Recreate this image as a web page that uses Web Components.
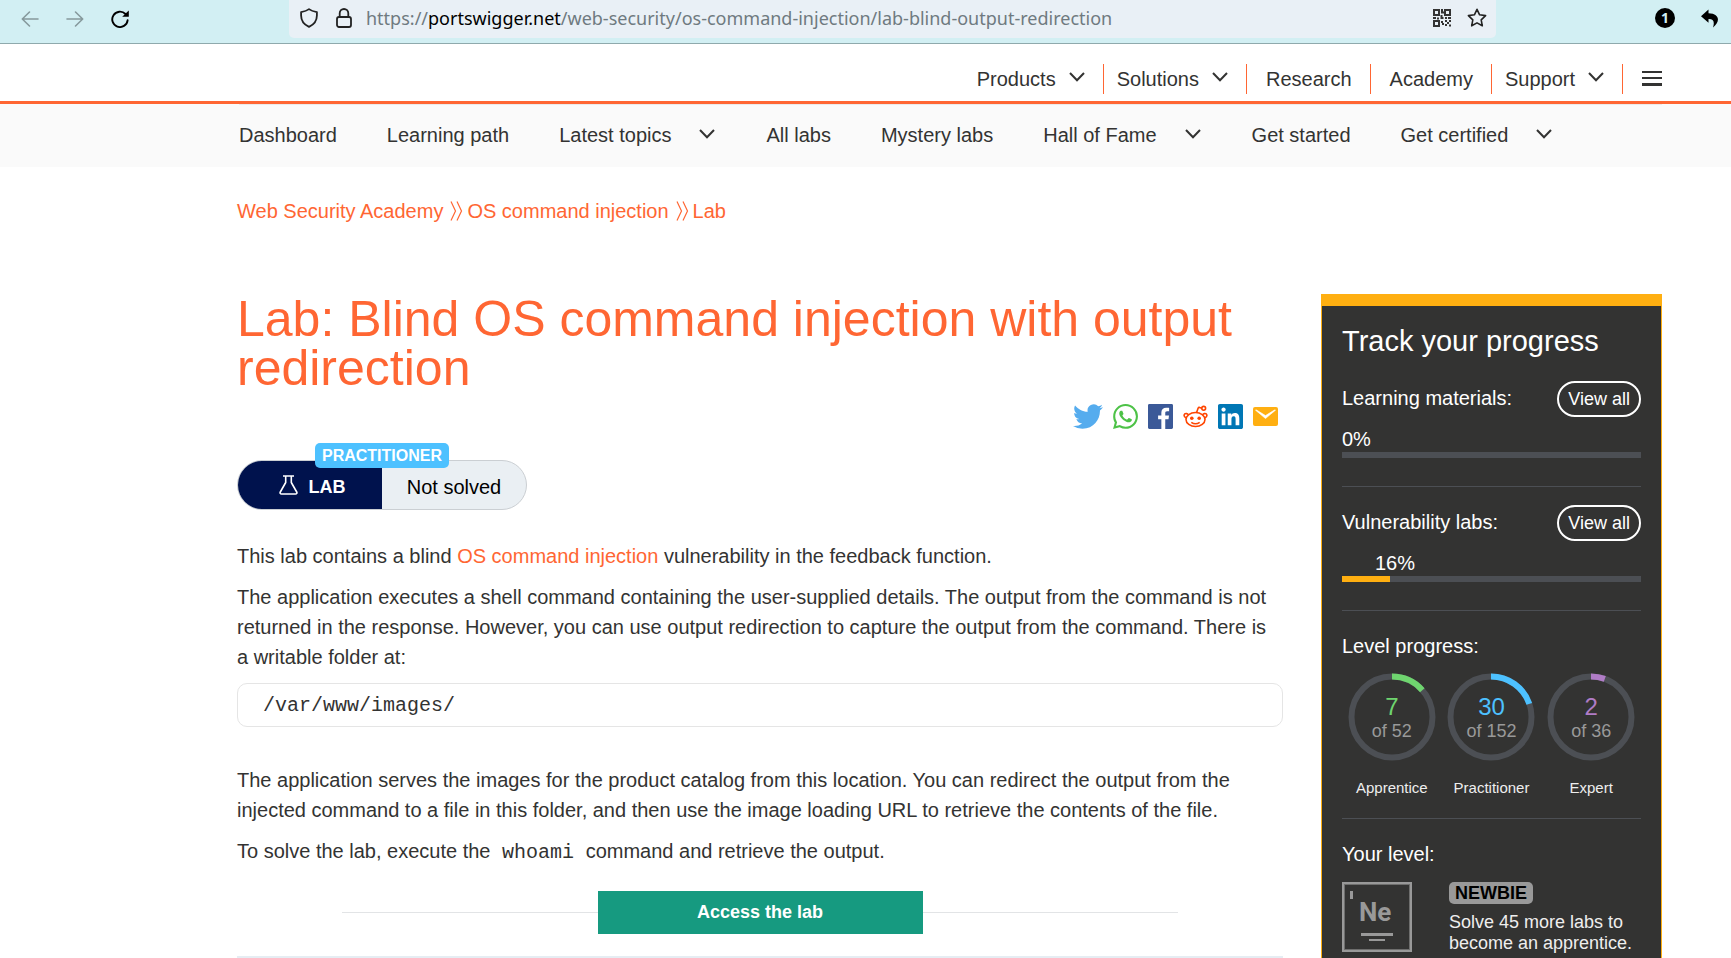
<!DOCTYPE html>
<html lang="en">
<head>
<meta charset="utf-8">
<title>Lab: Blind OS command injection with output redirection | Web Security Academy</title>
<style>
  :root {
    --brand: #ff6633;
    --ink: #333332;
    --amber: #ffaf11;
    --track: #4c4f54;
  }
  body {
    margin: 0;
    min-height: 100vh;
    display: flex;
    flex-direction: column;
    background: #fff;
    color: var(--ink);
    font: 20px/30px "Liberation Sans", Arial, sans-serif;
  }
</style>
</head>
<body>
<browser-bar></browser-bar>

<site-header>
  <nav-item href="#products" menu>Products</nav-item>
  <nav-item href="#solutions" menu>Solutions</nav-item>
  <nav-item href="#research" wide>Research</nav-item>
  <nav-item href="#academy" wide>Academy</nav-item>
  <nav-item href="#support" menu>Support</nav-item>
</site-header>

<academy-nav>
  <sub-item href="#dashboard">Dashboard</sub-item>
  <sub-item href="#path">Learning path</sub-item>
  <sub-item href="#topics" menu>Latest topics</sub-item>
  <sub-item href="#labs">All labs</sub-item>
  <sub-item href="#mystery">Mystery labs</sub-item>
  <sub-item href="#fame" menu>Hall of Fame</sub-item>
  <sub-item href="#start">Get started</sub-item>
  <sub-item href="#certified" menu>Get certified</sub-item>
</academy-nav>

<lab-page>
  <bread-crumbs slot="crumbs"></bread-crumbs>
  <lab-article slot="article"></lab-article>
  <progress-panel slot="aside">
    <progress-row label="Learning materials:" value="0" shift="0"></progress-row>
    <progress-row label="Vulnerability labs:" value="16" shift="33"></progress-row>
    <level-ring slot="rings" value="7" total="52" name="Apprentice" color="#6fd56f"></level-ring>
    <level-ring slot="rings" value="30" total="152" name="Practitioner" color="#4dc1ff"></level-ring>
    <level-ring slot="rings" value="2" total="36" name="Expert" color="#b07cc6"></level-ring>
  </progress-panel>
</lab-page>

<script>
const RESET = `:host{box-sizing:border-box} *{box-sizing:border-box;margin:0} a{color:inherit;text-decoration:none}
  button{font:inherit;color:inherit;background:none;border:0;padding:0;cursor:pointer} svg{display:block;flex:none}`;

function define(name, render) {
  customElements.define(name, class extends HTMLElement {
    connectedCallback() {
      if (this.shadowRoot) return;
      const t = document.createElement('template');
      t.innerHTML = render(this);
      this.attachShadow({ mode: 'open' }).append(t.content.cloneNode(true));
    }
  });
}

const CHEVRON = `<svg width="16" height="10" viewBox="0 0 16 10" fill="none" stroke="#333332" stroke-width="2"><path d="M1 1l7 7.3L15 1"/></svg>`;

define('browser-bar', () => `
<style>${RESET}
  :host{display:flex;height:44px;background:#d2eff3;border-bottom:1px solid #8fa9ac;color:#15141a;
    font-family:"Noto Sans","Open Sans",sans-serif;font-size:18px;line-height:24px}
  .nav{display:flex;align-items:flex-start;gap:27px;padding:10px 0 0 21px;flex:0 0 289px}
  .url{flex:1;display:flex;align-items:center;height:38px;background:#e9f0f6;border-radius:0 0 5px 5px;padding:0 9px 2px 11px;min-width:0}
  .url button+button{margin-left:18px}
  .url .address+button+button{margin-left:16px}
  .address{flex:1;margin-left:14px;color:#6f7a80;white-space:nowrap;overflow:hidden}
  .address b{font-weight:400;color:#000}
  .tools{display:flex;align-items:flex-start;gap:26px;padding:8px 12px 0 0;flex:0 0 235px;justify-content:flex-end}
  .count{width:20px;height:20px;border-radius:50%;background:#000;color:#d2eff3;font-size:14px;line-height:20px;font-weight:700;text-align:center}
</style>
<div class="nav">
  <button aria-label="Back" disabled><svg width="18" height="18" viewBox="0 0 18 18" fill="none" stroke="#86999c" stroke-width="1.6" stroke-linecap="round" stroke-linejoin="round"><path d="M8.5 2L1.3 9l7.2 7M1.5 9H17"/></svg></button>
  <button aria-label="Forward" disabled><svg width="18" height="18" viewBox="0 0 18 18" fill="none" stroke="#86999c" stroke-width="1.6" stroke-linecap="round" stroke-linejoin="round"><path d="M9.5 2l7.2 7-7.2 7M16.500 9H1"/></svg></button>
  <button aria-label="Reload"><svg width="18" height="18" viewBox="0 0 18 18"><path d="M14.500 4A7.700 7.700 0 1 0 16.600 10.300" fill="none" stroke="#000" stroke-width="1.900" stroke-linecap="round"/><path d="M17.800.4v6.300h-6.600z" fill="#000"/></svg></button>
</div>
<div class="url">
  <button aria-label="Tracking protection"><svg width="18" height="20" viewBox="0 0 18 20" fill="none" stroke="#222" stroke-width="1.800" stroke-linejoin="round"><path d="M9 1.100C7 2.600 4.200 3.500 1.100 4.100V7.500C1.100 12.500 4.500 16.800 9 18.900c4.500-2.100 7.900-6.400 7.900-11.400V4.100C13.800 3.500 11 2.600 9 1.100z"/></svg></button>
  <button aria-label="Connection secure"><svg width="16" height="20" viewBox="0 0 16 20" fill="none" stroke="#222" stroke-width="1.800"><rect x="1" y="9" width="14" height="10" rx="2"/><path d="M3.700 9V5.300a4.300 4.300 0 0 1 8.600 0V9"/></svg></button>
  <div class="address" role="textbox" aria-label="Address" aria-readonly="true">https://<b>portswigger.net</b>/web-security/os-command-injection/lab-blind-output-redirection</div>
  <button aria-label="QR code"><svg width="18" height="18" viewBox="0 0 18 18" fill="none" stroke="#333" stroke-width="2"><path d="M1 1h5v5H1zM12 1h5v5h-5zM1 12h5v5H1zM8 3.500h3M9 0v3M7.500 9h3M0 9h3M4 9.500h2M15 9h3M12 9h2M8.500 6v2M9 15h2M9 12v2M12 12h2M14 14h2M16 12h2M12 16h2M16 16.500h2"/></svg></button>
  <button aria-label="Bookmark this page"><svg width="20" height="20" viewBox="0 0 20 20" fill="none" stroke="#222" stroke-width="1.600" stroke-linejoin="round"><path d="M10 1.300l2.600 5.500 6 .8-4.400 4.200 1.100 6L10 14.900l-5.300 2.900 1.100-6L1.400 7.600l6-.8z"/></svg></button>
</div>
<div class="tools">
  <button class="count" aria-label="1 container">1</button>
  <button aria-label="Undo close tab"><svg width="18" height="20" viewBox="0 0 18 20"><path d="M7.500 1.500L0 8.200l7.500 6.600V11c4.500-.2 6.500 2 4.500 8.500C19 14.500 19.500 5.600 7.500 5.300z" fill="#000"/></svg></button>
</div>`);

define('site-header', () => `
<style>${RESET}
  :host{display:block;border-bottom:3px solid var(--brand)}
  nav{display:flex;justify-content:flex-end;padding:20px 69px 7px 237px}
  button{padding:7px 0 8px 19px}
</style>
<nav aria-label="Main"><slot></slot>
  <button aria-label="Menu"><svg width="20" height="15" viewBox="0 0 20 15" fill="#333332"><path d="M0 0h20v2H0zM0 6h20v2H0zM0 12h20v3H0z"/></svg></button>
</nav>`);

define('nav-item', el => `
<style>${RESET}
  :host{display:block;border-right:1px solid var(--brand);padding:0 18px 0 13px}
  :host([wide]){padding:0 18px 0 19px}
  a{display:flex;gap:13px}
  svg{margin-top:8px}
</style>
<a href="${el.getAttribute('href')}"><slot></slot>${el.hasAttribute('menu') ? CHEVRON : ''}</a>`);

define('academy-nav', () => `
<style>${RESET}
  :host{display:block;background:#fafafa;padding:0 69px 0 239px}
  nav{display:flex;gap:50px;padding:15px 0 17px;border-top:1px solid #eceaea}
</style>
<nav aria-label="Academy"><slot></slot></nav>`);

define('sub-item', el => `
<style>${RESET}
  :host{display:block;white-space:nowrap}
  a{display:flex;gap:28px}
  svg{margin:9px 1px 0 0}
</style>
<a href="${el.getAttribute('href')}"><slot></slot>${el.hasAttribute('menu') ? CHEVRON : ''}</a>`);

define('lab-page', () => `
<style>${RESET}
  :host{flex:1;display:flex;flex-direction:column;padding:29px 69px 0 237px}
  main{flex:1;display:flex;gap:38px;padding-top:68px}
  slot[name=article]::slotted(*){flex:1;min-width:0}
</style>
<slot name="crumbs"></slot>
<main><slot name="article"></slot><slot name="aside"></slot></main>`);

const GUILLEMET = `<svg width="13" height="20" viewBox="0 0 13 20" fill="none" stroke="#ff6633" stroke-width="1.200"><path d="M1 .5L5.500 10 1 19.500M7 .5L11.500 10 7 19.500"/></svg>`;
define('bread-crumbs', () => `
<style>${RESET}
  :host{display:block;color:var(--brand)}
  nav{display:flex}
  svg{margin:5px 4px 0 7px}
</style>
<nav aria-label="Breadcrumb"><a href="#academy">Web Security Academy</a>${GUILLEMET}<a href="#os">OS command injection</a>${GUILLEMET}<a href="#lab">Lab</a></nav>`);

define('share-bar', () => `
<style>${RESET}
  :host{display:flex;justify-content:flex-end;align-items:center;gap:10px;padding:11px 5px 0}
</style>
<a href="#twitter" aria-label="Twitter"><svg width="30" height="25" viewBox="0 2 24 20" fill="#55acee"><path d="M23.953 4.570a10 10 0 01-2.825.775 4.958 4.958 0 002.163-2.723c-.951.555-2.005.959-3.127 1.184a4.920 4.920 0 00-8.384 4.482C7.690 8.095 4.067 6.130 1.640 3.162a4.822 4.822 0 00-.666 2.475c0 1.710.870 3.213 2.188 4.096a4.904 4.904 0 01-2.228-.616v.060a4.923 4.923 0 003.946 4.827 4.996 4.996 0 01-2.212.085 4.936 4.936 0 004.604 3.417 9.867 9.867 0 01-6.102 2.105c-.390 0-.779-.023-1.170-.067a13.995 13.995 0 007.557 2.209c9.053 0 13.998-7.496 13.998-13.985 0-.210 0-.420-.015-.630A9.935 9.935 0 0024 4.590z"/></svg></a>
<a href="#whatsapp" aria-label="WhatsApp"><svg width="25" height="25" viewBox="0 0 24 24" fill="#4dc247"><path d="M17.472 14.382c-.297-.149-1.758-.867-2.030-.967-.273-.099-.471-.148-.670.150-.197.297-.767.966-.940 1.164-.173.199-.347.223-.644.075-.297-.150-1.255-.463-2.390-1.475-.883-.788-1.480-1.761-1.653-2.059-.173-.297-.018-.458.130-.606.134-.133.298-.347.446-.520.149-.174.198-.298.298-.497.099-.198.050-.371-.025-.520-.075-.149-.669-1.612-.916-2.207-.242-.579-.487-.500-.669-.510-.173-.008-.371-.010-.570-.010-.198 0-.520.074-.792.372-.272.297-1.040 1.016-1.040 2.479 0 1.462 1.065 2.875 1.213 3.074.149.198 2.096 3.200 5.077 4.487.709.306 1.262.489 1.694.625.712.227 1.360.195 1.871.118.571-.085 1.758-.719 2.006-1.413.248-.694.248-1.289.173-1.413-.074-.124-.272-.198-.570-.347m-5.421 7.403h-.004a9.870 9.870 0 01-5.031-1.378l-.361-.214-3.741.982.998-3.648-.235-.374a9.860 9.860 0 01-1.510-5.260c.001-5.450 4.436-9.884 9.888-9.884 2.640 0 5.122 1.030 6.988 2.898a9.825 9.825 0 012.893 6.994c-.003 5.450-4.437 9.884-9.885 9.884m8.413-18.297A11.815 11.815 0 0012.050 0C5.495 0 .160 5.335.157 11.892c0 2.096.547 4.142 1.588 5.945L.057 24l6.305-1.654a11.882 11.882 0 005.683 1.448h.005c6.554 0 11.890-5.335 11.893-11.893a11.821 11.821 0 00-3.480-8.413z"/></svg></a>
<a href="#facebook" aria-label="Facebook"><svg width="25" height="25" viewBox="0 0 24 24" fill="#3b5998"><path d="M22.676 0H1.324C.593 0 0 .593 0 1.324v21.352C0 23.408.593 24 1.324 24h11.494v-9.294H9.689v-3.621h3.129V8.410c0-3.099 1.894-4.785 4.659-4.785 1.325 0 2.464.097 2.796.141v3.240h-1.921c-1.500 0-1.792.721-1.792 1.771v2.311h3.584l-.465 3.630H16.560V24h6.115c.733 0 1.325-.592 1.325-1.324V1.324C24 .593 23.408 0 22.676 0"/></svg></a>
<a href="#reddit" aria-label="Reddit"><svg width="25" height="25" viewBox="0 0 25 25" fill="none" stroke="#ff4500" stroke-width="1.600"><ellipse cx="12.500" cy="15.500" rx="9.500" ry="7"/><path d="M3.200 13.800C-.2 12.300 1 9.200 3.600 9.600c.9.200 1.400.7 1.900 1.200M21.800 13.800c3.400-1.500 2.200-4.600-.4-4.200-.9.200-1.400.7-1.900 1.200M13.600 8.500l1.500-4.300q.4-1 1.400-.8l2.400.8M8.300 18.300c2.400 1.700 6 1.700 8.400 0"/><circle cx="20.700" cy="4.300" r="1.900"/><circle cx="8.800" cy="14.200" r="1.800" fill="#ff4500" stroke="none"/><circle cx="16.200" cy="14.200" r="1.800" fill="#ff4500" stroke="none"/></svg></a>
<a href="#linkedin" aria-label="LinkedIn"><svg width="25" height="25" viewBox="0 0 24 24" fill="#0077b5"><path d="M20.447 20.452h-3.554v-5.569c0-1.328-.027-3.037-1.852-3.037-1.853 0-2.136 1.445-2.136 2.939v5.667H9.351V9h3.414v1.561h.046c.477-.900 1.637-1.850 3.370-1.850 3.601 0 4.267 2.370 4.267 5.455v6.286zM5.337 7.433c-1.144 0-2.063-.926-2.063-2.065 0-1.138.920-2.063 2.063-2.063 1.140 0 2.064.925 2.064 2.063 0 1.139-.925 2.065-2.064 2.065zm1.782 13.019H3.555V9h3.564v11.452zM22.225 0H1.771C.792 0 0 .774 0 1.729v20.542C0 23.227.792 24 1.771 24h20.451C23.200 24 24 23.227 24 22.271V1.729C24 .774 23.200 0 22.222 0h.003z"/></svg></a>
<a href="#email" aria-label="Email"><svg width="25" height="19" viewBox="0 0 25 19"><rect width="25" height="19" rx="2" fill="#ffaf11"/><path d="M2.500 3.200l10 8.300 10-8.300-1-.2-9 5.600L3.500 3z" fill="#fff" stroke="#fff" stroke-width=".6"/></svg></a>`);

define('lab-status', () => `
<style>${RESET}
  :host{display:block;position:relative;width:290px}
  .pill{display:flex;height:50px;border:1px solid #cbcfd3;border-radius:25px;overflow:hidden;background:#eaeff3;color:#000}
  .pill>span{flex:0 0 50%;display:flex;align-items:center;justify-content:center}
  .kind{gap:11px;padding-left:4px;background:#00124d;color:#fff;font-size:18px;font-weight:700}
  .state{padding-top:4px}
  .kind b{margin-top:4px}
  .level{position:absolute;left:78px;top:-17px;padding:1px 7px 0;border-radius:5px;background:#4dc1ff;color:#fff;font-size:16px;line-height:24px;font-weight:700}
</style>
<div class="pill">
  <span class="kind"><svg width="19" height="20" viewBox="0 0 19 20" fill="none" stroke="#fff" stroke-width="1.600" stroke-linejoin="round"><path d="M4 1h11M6.700 1v6.500L1.300 17c-.6 1.100 0 2 1.200 2h14c1.200 0 1.800-.9 1.200-2L12.300 7.500V1"/></svg><b>LAB</b></span>
  <span class="state">Not solved</span>
</div>
<span class="level">PRACTITIONER</span>`);

define('lab-article', () => `
<style>${RESET}
  :host{display:block;padding-top:1px}
  h1{font-size:50px;line-height:49px;font-weight:400;color:var(--brand)}
  p{margin-top:11px;padding-right:8px}
  p a{color:var(--brand)}
  lab-status{margin-top:31px}
  lab-status + p{margin-top:31px}
  pre{margin:11px 0 38px;height:44px;padding:3px 25px;border:1px solid #e5e5e5;border-radius:10px;line-height:38px}
  pre,code{font-family:"Liberation Mono","Courier New",monospace;font-size:20px}
  p code{padding:0 6px;line-height:20px}
  .access{display:flex;align-items:center;margin:25px 10% 22px}
  .access::before,.access::after{content:"";flex:1;height:1px;background:#e2e4e6}
  .access a{flex:0 0 325px;background:#169a80;color:#fff;font-size:18px;line-height:43px;font-weight:700;text-align:center}
  hr{border:0;height:2px;background:#e6edf3}
</style>
<h1>Lab: Blind OS command injection with output redirection</h1>
<share-bar></share-bar>
<lab-status></lab-status>
<p>This lab contains a blind <a href="#os">OS command injection</a> vulnerability in the feedback function.</p>
<p>The application executes a shell command containing the user-supplied details. The output from the command is not returned in the response. However, you can use output redirection to capture the output from the command. There is a writable folder at:</p>
<pre>/var/www/images/</pre>
<p>The application serves the images for the product catalog from this location. You can redirect the output from the injected command to a file in this folder, and then use the image loading URL to retrieve the contents of the file.</p>
<p>To solve the lab, execute the <code>whoami</code> command and retrieve the output.</p>
<div class="access"><a href="#access">Access the lab</a></div>
<hr>`);

define('progress-panel', () => `
<style>${RESET}
  :host{display:block;width:341px;flex:none;background:var(--ink);color:#fff;border:1px solid var(--amber);border-top-width:12px;border-bottom:0;padding:18px 20px 0}
  h2{font-size:29px;line-height:34px;font-weight:400;margin-bottom:23px}
  h3{font-size:20px;line-height:30px;font-weight:400}
  section{padding-top:20px;border-bottom:1px solid var(--track)}
  .rings{display:grid;grid-template-columns:repeat(3,1fr);padding:12px 0 20px}
  .yours{border:0}
  .level{display:flex;gap:37px;padding-top:13px}
  .level div{font-size:18px;line-height:21px;color:#eee}
  .tag{display:block;width:fit-content;padding:0 6px;margin-bottom:8px;border-radius:5px;background:#999;color:#000;line-height:22px;font-weight:700}
</style>
<h2>Track your progress</h2>
<slot></slot>
<section><h3>Level progress:</h3><div class="rings"><slot name="rings"></slot></div></section>
<section class="yours"><h3>Your level:</h3>
  <div class="level">
    <svg width="70" height="70" viewBox="0 0 70 70" role="img" aria-label="Newbie badge"><rect x="1" y="1" width="68" height="68" fill="none" stroke="#999" stroke-width="2"/><rect x="2.500" y="2.500" width="65" height="65" fill="none" stroke="#6e6e6d"/><path d="M8 9h3v8H8zM19 51h32v3H19zM27 57h16v2H27z" fill="#999"/><text x="17" y="39" font-family="Roboto, sans-serif" font-weight="700" font-size="26" fill="#999">Ne</text></svg>
    <div><span class="tag">NEWBIE</span>Solve 45 more labs to become an apprentice.</div>
  </div>
</section>`);

define('progress-row', el => {
  const v = el.getAttribute('value');
  return `
<style>${RESET}
  :host{display:block;border-bottom:1px solid var(--track);padding-bottom:28px}
  :host(:nth-of-type(2)){padding-top:18px}
  .top{display:flex;justify-content:space-between;align-items:flex-start;height:36px}
  .all{border:2px solid #fff;border-radius:18px;padding:0 9px;font-size:18px;line-height:32px}
  label{display:block;margin-top:2px}
  .pct{margin:9px 0 0 ${el.getAttribute('shift')}px;line-height:26px}
  progress{display:block;width:100%;height:6px;appearance:none;border:0;background:var(--track)}
  progress::-webkit-progress-bar{background:var(--track)}
  progress::-webkit-progress-value{background:var(--amber)}
</style>
<div class="top"><label for="bar">${el.getAttribute('label')}</label><a class="all" href="#all">View all</a></div>
<div class="pct">${v}%</div>
<progress id="bar" max="100" value="${v}"></progress>`;
});

define('level-ring', el => {
  const v = +el.getAttribute('value'), t = +el.getAttribute('total'), c = el.getAttribute('color');
  return `
<style>${RESET}
  :host{display:flex;flex-direction:column;align-items:center}
  .ring{display:grid;place-items:center}
  .ring>*{grid-area:1/1}
  .count{padding-top:2px;text-align:center;font-size:18px;line-height:22px;color:#999}
  .count b{display:block;font-size:24px;line-height:26px;font-weight:400;color:${c}}
  .name{margin-top:17px;font-size:15px;line-height:20px;color:#eee}
</style>
<div class="ring">
  <svg width="88" height="88" viewBox="0 0 88 88" fill="none" stroke-width="6"><circle cx="44" cy="44" r="40.500" stroke="#4c4f54"/><circle cx="44" cy="44" r="40.500" stroke="${c}" pathLength="${t}" stroke-dasharray="${v} ${t}" transform="rotate(-90 44 44)"/></svg>
  <div class="count"><b>${v}</b>of ${t}</div>
</div>
<div class="name">${el.getAttribute('name')}</div>`;
});
</script>
</body>
</html>
